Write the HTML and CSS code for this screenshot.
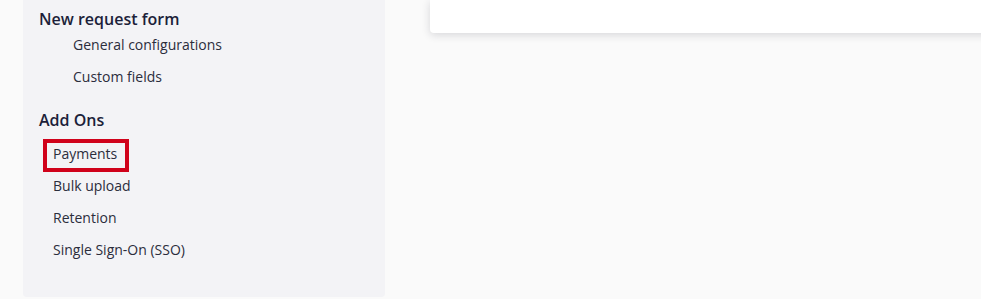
FILE: index.html
```html
<!DOCTYPE html>
<html lang="en">
<head>
<meta charset="utf-8">
<title>Settings</title>
<link rel="stylesheet" href="styles.css">
</head>
<body>
<div class="layout">
  <aside class="sidebar">
    <section class="group">
      <h3 class="group-title">New request form</h3>
      <ul class="nav nav-deep">
        <li class="nav-item">General configurations</li>
        <li class="nav-item">Custom fields</li>
      </ul>
    </section>
    <section class="group group-addons">
      <h3 class="group-title">Add Ons</h3>
      <ul class="nav nav-shallow">
        <li class="nav-item"><span class="highlight">Payments</span></li>
        <li class="nav-item">Bulk upload</li>
        <li class="nav-item">Retention</li>
        <li class="nav-item">Single Sign-On (SSO)</li>
      </ul>
    </section>
  </aside>
  <main class="content">
    <div class="card"></div>
  </main>
</div>
</body>
</html>
```

FILE: styles.css
```css
*, *::before, *::after { box-sizing: border-box; }

html, body {
  margin: 0;
  padding: 0;
}

body {
  background: #fafafa;
  font-family: "Open Sans", "Noto Sans", sans-serif;
  overflow: hidden;
  width: 981px;
  height: 299px;
}

.layout {
  display: flex;
  align-items: flex-start;
  padding-left: 23px;
}

.sidebar {
  width: 362px;
  flex: 0 0 362px;
  height: 297px;
  background: #f3f3f6;
  border-radius: 0 0 4px 4px;
  padding: 10px 16px 0 16px;
}

.group-title {
  margin: 0;
  font-size: 16px;
  font-weight: 600;
  line-height: 19px;
  color: #1c1f3a;
}

.group-addons {
  margin-top: 18px;
}

.nav {
  list-style: none;
  margin: 0;
  padding: 0;
}

.nav-deep {
  padding-left: 34px;
}

.nav-shallow {
  padding-left: 14px;
  margin-top: 8px;
}

.nav-item {
  font-size: 14px;
  line-height: 32px;
  height: 32px;
  color: #2b2d3c;
}

.highlight {
  position: relative;
  display: inline-block;
}

.highlight::after {
  content: "";
  position: absolute;
  left: -10px;
  top: 1px;
  width: 86px;
  height: 33px;
  border: 4px solid #d0021b;
}

.content {
  flex: 1;
  padding-left: 45px;
  margin-right: -20px;
}

.card {
  height: 33px;
  background: #ffffff;
  border-radius: 0 0 0 4px;
  box-shadow: 0 2px 8px rgba(30, 30, 50, 0.16);
}
```
